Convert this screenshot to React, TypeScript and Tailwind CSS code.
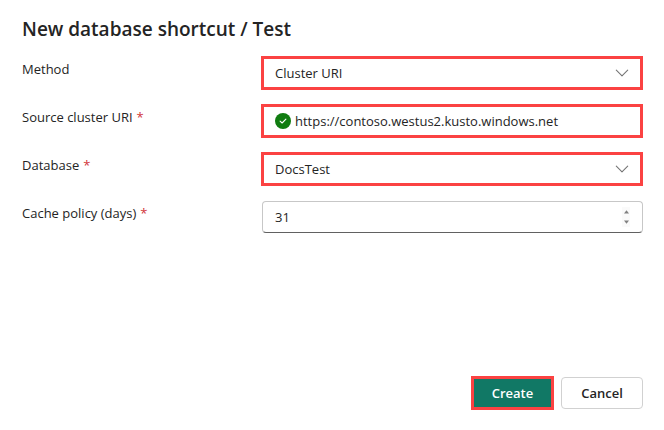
import { useState, type ReactNode } from "react";

const textBase = "text-[13px] leading-5 text-[#242424]";
const highlight = "border-[3px] border-[#fb4242]";

function Label({ htmlFor, required, children }: { htmlFor: string; required?: boolean; children: ReactNode }) {
  return (
    <label htmlFor={htmlFor} className={`self-start pt-[3px] ${textBase}`}>
      {children}
      {required && <span className="ml-1 text-[#d13438]">*</span>}
    </label>
  );
}

function Dropdown({ id, value }: { id: string; value: string }) {
  return (
    <div className={`relative h-[34px] bg-white ${highlight}`}>
      <select id={id} className={`h-full w-full appearance-none bg-transparent pr-9 pl-[11px] outline-none ${textBase}`}>
        <option>{value}</option>
      </select>
      <svg
        className="pointer-events-none absolute top-[10px] right-[11px] h-2 w-[14px]"
        viewBox="0 0 14 8"
        fill="none"
        stroke="#757575"
        strokeWidth="1.1"
        strokeLinecap="round"
        strokeLinejoin="round"
      >
        <path d="M1.3 1.2 L7 6.8 L12.7 1.2" />
      </svg>
    </div>
  );
}

export default function App() {
  const [uri, setUri] = useState("https://contoso.westus2.kusto.windows.net");
  const [days, setDays] = useState(31);

  return (
    <form
      className="flex min-h-screen flex-col bg-white pt-[15px] pr-[21px] pb-5 pl-[22px] font-['Open_Sans','Noto_Sans',sans-serif]"
      onSubmit={(e) => e.preventDefault()}
    >
      <h1 className="text-[19px] leading-7 font-semibold text-[#242424]">New database shortcut / Test</h1>

      <div className="mt-[13px] grid grid-cols-[239px_1fr] gap-y-[14px]">
        <Label htmlFor="method">Method</Label>
        <Dropdown id="method" value="Cluster URI" />

        <Label htmlFor="uri" required>Source cluster URI</Label>
        <div className={`flex h-[34px] items-center gap-1 bg-white pl-[11px] ${highlight}`}>
          <svg className="h-4 w-4 shrink-0" viewBox="0 0 16 16" fill="none">
            <circle cx="8" cy="8" r="8" fill="#107c10" />
            <path d="M5.1 8.2 L7.1 10 L10.9 6.2" stroke="#fff" strokeWidth="1.1" strokeLinecap="round" strokeLinejoin="round" />
          </svg>
          <input
            id="uri"
            type="text"
            value={uri}
            onChange={(e) => setUri(e.target.value)}
            className={`h-full min-w-0 flex-1 bg-transparent outline-none ${textBase}`}
          />
        </div>

        <Label htmlFor="database" required>Database</Label>
        <Dropdown id="database" value="DocsTest" />

        <Label htmlFor="days" required>Cache policy (days)</Label>
        <div className="my-px ml-px flex h-8 items-center rounded border border-[#c7c7c7] border-b-[#616161] bg-white pr-3 pl-3">
          <input
            id="days"
            type="text"
            inputMode="numeric"
            value={days}
            onChange={(e) => setDays(Number(e.target.value) || 0)}
            className={`h-full min-w-0 flex-1 bg-transparent outline-none ${textBase}`}
          />
          <div className="flex w-2 flex-col bg-[#fafafa]">
            <button type="button" aria-label="Increase" className="flex h-[10px] items-center justify-center" onClick={() => setDays(days + 1)}>
              <svg className="h-1 w-[5px]" viewBox="0 0 5 4" fill="#808080">
                <path d="M0 3.5 L2.5 0.3 L5 3.5 Z" />
              </svg>
            </button>
            <button type="button" aria-label="Decrease" className="flex h-[10px] items-center justify-center" onClick={() => setDays(days - 1)}>
              <svg className="h-1 w-[5px]" viewBox="0 0 5 4" fill="#808080">
                <path d="M0 0.5 L2.5 3.7 L5 0.5 Z" />
              </svg>
            </button>
          </div>
        </div>
      </div>

      <div className="mt-auto flex items-center justify-end gap-[7px] text-[13px] leading-5 font-semibold">
        <button type="submit" className={`h-[34px] w-[83px] bg-[#117865] text-white ${highlight}`}>Create</button>
        <button type="button" className="h-8 w-[82px] rounded border border-[#d1d1d1] bg-white text-[#242424]">Cancel</button>
      </div>
    </form>
  );
}
